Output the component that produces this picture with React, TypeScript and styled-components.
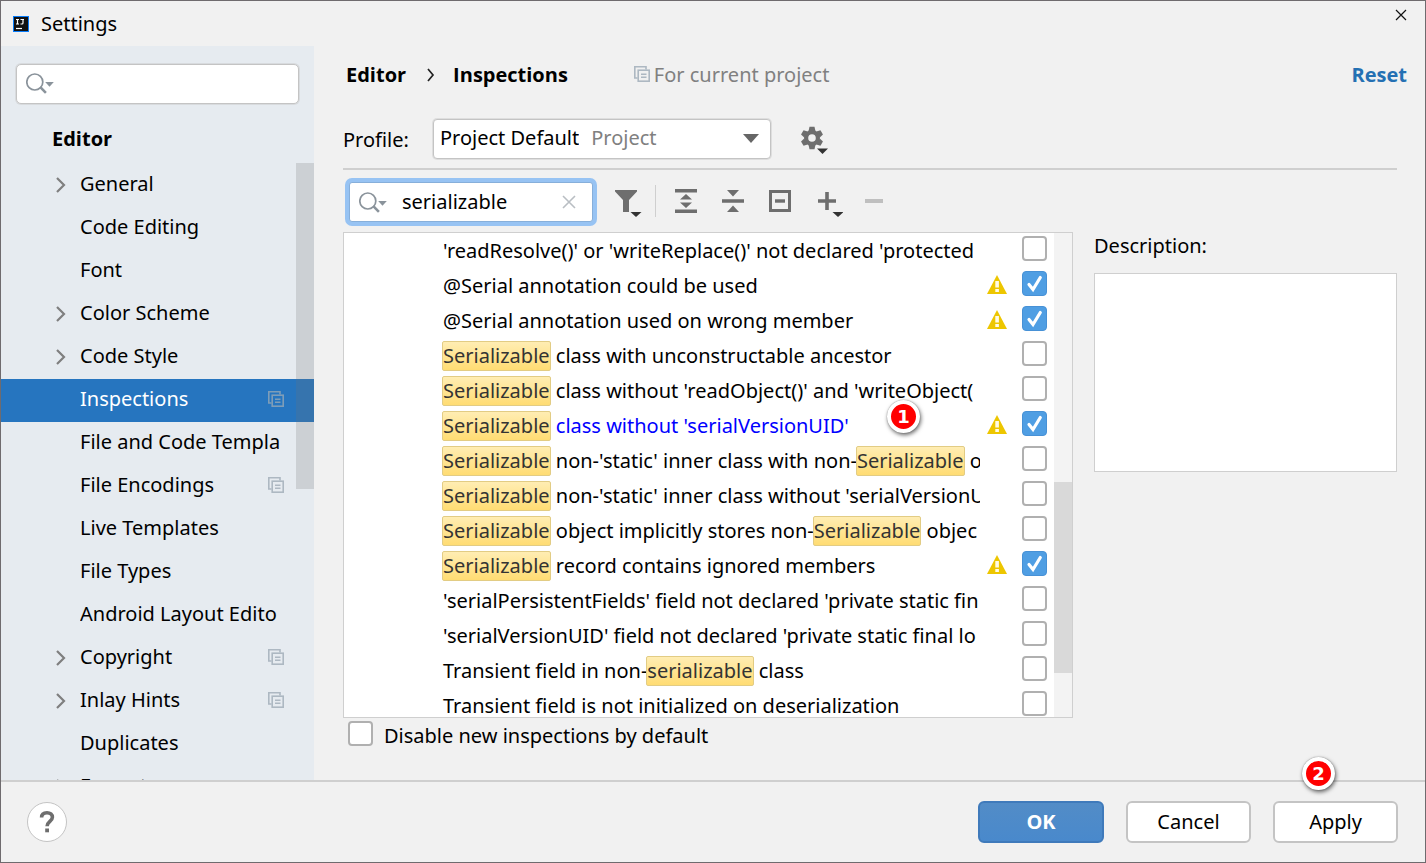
import React, { Fragment, useState } from "react";
import styled, { createGlobalStyle, css } from "styled-components";

const color = {
  frame: "#6f6b6e",
  window: "#f1f1f1",
  sidebar: "#e6ebf0",
  selection: "#2675bf",
  line: "#cfcfcf",
  border: "#c4c4c4",
  icon: "#6e6e6e",
  muted: "#808080",
  accent: "#4f9ee3",
};

const GlobalStyle = createGlobalStyle`
  *, *::before, *::after { box-sizing: border-box; }
  body {
    margin: 0;
    background: ${color.window};
  }
  body, button, input, select {
    font-family: "Noto Sans", "Open Sans", sans-serif;
    font-size: 20px;
    line-height: 28px;
    color: #000;
  }
`;

const boldText = css`
  font-family: "Open Sans", "Noto Sans", sans-serif;
  font-weight: 700;
`;

const Window = styled.div`
  display: flex;
  flex-direction: column;
  height: 100vh;
  border: 1px solid ${color.frame};
  background: ${color.window};
  overflow: hidden;
`;

const TitleBar = styled.header`
  display: flex;
  align-items: center;
  flex: none;
  height: 45px;
  padding: 0 18px 0 12px;
  gap: 12px;
`;

const TitleText = styled.h1`
  flex: 1;
  margin: 0;
  font-size: 20px;
  font-weight: 400;
`;

const CloseButton = styled.button`
  display: flex;
  padding: 0;
  border: 0;
  margin-bottom: 18px;
  background: none;
`;

const Body = styled.div`
  display: flex;
  flex: 1;
  min-height: 0;
`;

const Sidebar = styled.nav`
  position: relative;
  display: flex;
  flex-direction: column;
  flex: none;
  width: 313px;
  background: ${color.sidebar};
  overflow: hidden;
`;

const SidebarSearch = styled.label`
  display: flex;
  align-items: center;
  flex: none;
  height: 40px;
  margin: 18px 15px 0;
  padding: 0 9px 2px;
  gap: 10px;
  border: 1px solid ${color.border};
  border-radius: 5px;
  background: #fff;
  box-shadow: 0 0 0 1px rgba(196, 196, 196, 0.4);
`;

const TextInput = styled.input`
  flex: 1;
  min-width: 0;
  padding: 0;
  border: 0;
  outline: 0;
  background: transparent;
`;

const TreeHeading = styled.h2`
  flex: none;
  height: 46px;
  margin: 14px 0 0;
  padding: 6px 0 0 51px;
  font-size: 20px;
  line-height: 30px;
  ${boldText}
`;

const Tree = styled.ul`
  flex: none;
  margin: 0;
  padding: 0;
  list-style: none;
`;

const TreeItem = styled.a<{ $selected?: boolean }>`
  display: flex;
  align-items: center;
  height: 43px;
  padding: 0 30px 4px 54px;
  color: ${(p) => (p.$selected ? "#fff" : "#000")};
  background: ${(p) => (p.$selected ? color.selection : "transparent")};
  text-decoration: none;
`;

const TreeArrow = styled.span`
  display: flex;
  flex: none;
  width: 25px;
  padding-top: 2px;
`;

const TreeLabel = styled.span`
  flex: 1;
  overflow: hidden;
  white-space: nowrap;
`;

const TreeScrollbar = styled.div`
  position: absolute;
  top: 117px;
  right: 0;
  width: 18px;
  height: 326px;
  background: rgba(115, 115, 115, 0.22);
`;

const Main = styled.main`
  display: flex;
  flex-direction: column;
  flex: 1;
  min-width: 0;
  padding: 0 28px 0 29px;
`;

const Breadcrumb = styled.div`
  display: flex;
  align-items: center;
  flex: none;
  height: 58px;
  margin-right: -10px;
  padding-left: 3px;
`;

const Crumb = styled.span`
  ${boldText}
`;

const CrumbArrow = styled.span`
  display: flex;
  padding: 0 18px 0 21px;
`;

const ScopeNote = styled.span`
  display: flex;
  align-items: center;
  flex: 1;
  gap: 4px;
  padding-left: 66px;
  color: ${color.muted};

  svg {
    margin-bottom: 2px;
  }
`;

const ResetLink = styled.a`
  color: #2470b3;
  text-decoration: none;
  ${boldText}
`;

const ProfileRow = styled.div`
  display: flex;
  align-items: center;
  flex: none;
  height: 66px;
  padding: 13px 0 7px;
  border-bottom: 2px solid ${color.line};
`;

const ProfileLabel = styled.label`
  flex: none;
  width: 90px;
  padding-top: 2px;
`;

const Combo = styled.span`
  display: flex;
  align-items: center;
  width: 338px;
  height: 40px;
  padding: 0 11px 2px 6px;
  border: 1px solid ${color.border};
  border-radius: 4px;
  background: #fff;
  box-shadow: 0 0 0 1px rgba(196, 196, 196, 0.4);
`;

const ComboSelect = styled.select`
  appearance: none;
  field-sizing: content;
  padding: 0;
  border: 0;
  outline: 0;
  background: transparent;
`;

const ComboHint = styled.span`
  flex: 1;
  padding-left: 12px;
  color: ${color.muted};
`;

const IconButton = styled.button<{ $width?: number }>`
  display: flex;
  align-items: center;
  justify-content: center;
  flex: none;
  width: ${(p) => p.$width ?? 47}px;
  height: 40px;
  padding: 0;
  border: 0;
  background: none;
`;

const Toolbar = styled.div`
  display: flex;
  align-items: center;
  flex: none;
  height: 62px;
  padding-left: 5px;
`;

const FilterSearch = styled.label`
  display: flex;
  align-items: center;
  flex: none;
  width: 244px;
  height: 40px;
  margin: 2px 9px 0 1px;
  padding: 0 16px 0 9px;
  gap: 13px;
  border: 1px solid #87afda;
  border-radius: 3px;
  background: #fff;
  box-shadow: 0 0 0 4px #97c3f3;
`;

const ClearButton = styled.button`
  display: flex;
  padding: 0;
  border: 0;
  background: none;
`;

const ToolSeparator = styled.span`
  width: 1px;
  height: 32px;
  margin: 0 6px;
  background: ${color.line};
`;

const Columns = styled.div`
  display: grid;
  grid-template-columns: minmax(0, 730fr) minmax(0, 303fr);
  gap: 21px;
  flex: 1;
  min-height: 0;
`;

const ListColumn = styled.div`
  display: flex;
  flex-direction: column;
  min-height: 0;
`;

const ListFrame = styled.div`
  display: flex;
  flex: 1;
  min-height: 0;
  border: 1px solid ${color.line};
  background: #fff;
  overflow: hidden;
`;

const InspectionList = styled.ul`
  flex: 1;
  min-width: 0;
  margin: 0;
  padding: 0;
  list-style: none;
`;

const InspectionRow = styled.li`
  position: relative;
  display: flex;
  height: 35px;
  padding: 0 7px 0 98px;
`;

const InspectionName = styled.span<{ $modified?: boolean }>`
  flex: 1;
  min-width: 0;
  padding-left: 1px;
  line-height: 35px;
  white-space: pre;
  overflow: hidden;
  color: ${(p) => (p.$modified ? "#0000ff" : "#000")};
`;

const Match = styled.mark`
  display: inline-block;
  height: 30px;
  margin-left: -1px;
  border: 1px solid #e2cc84;
  border-radius: 2px;
  color: #333;
  line-height: 28px;
  background: linear-gradient(#ffedb3, #ffdc73);
`;

const SeveritySlot = styled.span`
  display: flex;
  flex: none;
  width: 20px;
  margin: 7px 15px 0 7px;
`;

const CheckWrap = styled.span`
  display: grid;
  flex: none;
  width: 25px;
  height: 25px;
  margin-top: 3px;

  > * {
    grid-area: 1 / 1;
  }

  svg {
    pointer-events: none;
  }
`;

const CheckInput = styled.input`
  appearance: none;
  width: 25px;
  height: 25px;
  margin: 0;
  border: 2px solid #b0b0b0;
  border-radius: 4px;
  background: #fff;

  &:checked {
    border: 1px solid #4791d6;
    background: ${color.accent};
  }
`;

const ListScrollbar = styled.div`
  flex: none;
  width: 18px;
  padding-top: 249px;
  background: #f3f3f3;
`;

const ListThumb = styled.div`
  height: 191px;
  background: #d9d9d9;
`;

const DisableRow = styled.label`
  display: flex;
  flex: none;
  height: 62px;
  gap: 11px;
  padding-left: 5px;
`;

const DisableText = styled.span`
  padding-top: 4px;
`;

const DescriptionColumn = styled.section`
  display: flex;
  flex-direction: column;
`;

const DescriptionTitle = styled.h3`
  margin: 0;
  height: 41px;
  font-size: 20px;
  font-weight: 400;
`;

const DescriptionBox = styled.div`
  height: 199px;
  border: 1px solid ${color.line};
  background: #fff;
`;

const Footer = styled.footer`
  display: flex;
  align-items: center;
  flex: none;
  height: 82px;
  padding: 0 27px 0 26px;
  gap: 22px;
  border-top: 2px solid ${color.line};
`;

const HelpButton = styled.button`
  display: flex;
  align-items: center;
  justify-content: center;
  width: 40px;
  height: 40px;
  margin-right: auto;
  padding: 0;
  border: 1px solid ${color.border};
  border-radius: 50%;
  background: #fff;
`;

const FooterButton = styled.button<{ $primary?: boolean }>`
  position: relative;
  width: 125px;
  height: 42px;
  padding: 0;
  border: 2px solid ${color.border};
  border-radius: 6px;
  background: #fff;
  ${(p) =>
    p.$primary &&
    css`
      width: 126px;
      border-color: #3f7abb;
      background: linear-gradient(#528cc7, #4989cc);
      color: #fff;
      ${boldText}
    `}
`;

const Marker = styled.span<{ $left: number; $top: number }>`
  position: absolute;
  left: ${(p) => p.$left}px;
  top: ${(p) => p.$top}px;
  z-index: 1;
  width: 33px;
  height: 33px;
  border: 4px solid #fff;
  border-radius: 50%;
  background: #f00;
  box-shadow: 1px 2px 4px rgba(0, 0, 0, 0.6), 0 0 1px rgba(0, 0, 0, 0.5);
  color: #fff;
  font-family: "DejaVu Sans", sans-serif;
  font-size: 18px;
  line-height: 25px;
  font-weight: 700;
  text-align: center;
`;

const AppIcon = () => (
  <svg width="16" height="16" viewBox="0 0 16 16" aria-hidden="true">
    <rect width="16" height="16" fill="#087cfa" />
    <rect x="1" y="1" width="14" height="14" fill="#111" />
    <path d="M3 3.5h3M4.5 3.5v4M3 8h3M7.500 3.5h3.500M10 3.5v3.500q0 1-1 1H7.500" stroke="#fff" strokeWidth="1.2" fill="none" />
    <path d="M3 12.5h6" stroke="#fff" strokeWidth="1.2" />
  </svg>
);

const CloseIcon = () => (
  <svg width="12" height="12" viewBox="0 0 12 12" aria-hidden="true">
    <path d="M1 1l10 10M11 1L1 11" stroke="#111" strokeWidth="1.2" />
  </svg>
);

const SearchIcon = () => (
  <svg width="30" height="24" viewBox="0 0 30 24" aria-hidden="true" style={{ flex: "none" }}>
    <circle cx="8.8" cy="11" r="8" fill="none" stroke="#8a939b" strokeWidth="1.7" />
    <path d="M14.300 16.200l5.600 5.600" stroke="#8a939b" strokeWidth="2.6" />
    <path d="M19.200 11h8.6l-4.3 4.8z" fill="#8a939b" />
  </svg>
);

const ChevronIcon = () => (
  <svg width="12" height="18" viewBox="0 0 12 18" aria-hidden="true">
    <path d="M2 2l7 7-7 7" stroke="#7f7f7f" strokeWidth="2.2" fill="none" />
  </svg>
);

const CrumbChevron = () => (
  <svg width="8" height="14" viewBox="0 0 8 14" aria-hidden="true">
    <path d="M1 1l5 6-5 6" stroke="#222" strokeWidth="1.7" fill="none" />
  </svg>
);

const ScopeIcon = ({ tint = "#adb8c2" }: { tint?: string }) => (
  <svg width="16" height="16" viewBox="0 0 16 16" aria-hidden="true" style={{ flex: "none" }}>
    <path d="M3.500 12H.8V.8H12v2.700" stroke={tint} strokeWidth="1.6" fill="none" />
    <rect x="4.2" y="4.2" width="11" height="11" stroke={tint} strokeWidth="1.6" fill="none" />
    <path d="M7 8.200h5.500M7 11.300h5.500" stroke={tint} strokeWidth="1.5" />
  </svg>
);

const ComboArrow = () => (
  <svg width="16" height="9" viewBox="0 0 16 9" aria-hidden="true">
    <path d="M0 0h16L8 9z" fill="#666" />
  </svg>
);

const GearIcon = () => (
  <svg width="32" height="32" viewBox="0 0 32 32" aria-hidden="true">
    <g fill={color.icon} transform="translate(14 15)">
      <path
        fillRule="evenodd"
        d="M-8 0a8 8 0 1 0 16 0a8 8 0 1 0-16 0zM-3.8 0a3.8 3.8 0 1 0 7.6 0a3.8 3.8 0 1 0-7.6 0z"
      />
      {[0, 60, 120, 180, 240, 300].map((angle) => (
        <path key={angle} d="M-3.4-7l.9-4.2h5l.9 4.2z" transform={`rotate(${angle})`} />
      ))}
    </g>
    <path d="M19 25.5h11L24.500 31z" fill="#333" />
  </svg>
);

const FilterIcon = () => (
  <svg width="32" height="32" viewBox="0 0 32 32" aria-hidden="true">
    <path d="M5 5h22v1.500l-8 8.500v12h-6v-12l-8-8.500z" fill={color.icon} />
    <path d="M20.500 27h11L26 32z" fill="#333" />
  </svg>
);

const ExpandIcon = () => (
  <svg width="24" height="26" viewBox="0 0 24 26" aria-hidden="true">
    <path d="M1 1h22v3.500H1zM1 21.500h22V25H1zM12 6l6 5.500H6zM12 20l6-5.500H6z" fill={color.icon} />
  </svg>
);

const CollapseIcon = () => (
  <svg width="24" height="24" viewBox="0 0 24 24" aria-hidden="true">
    <path d="M1 10.200h22v3.600H1zM6 1h12l-6 6.500zM6 23h12l-6-6.500z" fill={color.icon} />
  </svg>
);

const GroupIcon = () => (
  <svg width="24" height="24" viewBox="0 0 24 24" aria-hidden="true">
    <rect x="2.500" y="2.500" width="19" height="19" fill="none" stroke={color.icon} strokeWidth="3" />
    <path d="M7 12h10" stroke={color.icon} strokeWidth="3.400" />
  </svg>
);

const AddIcon = () => (
  <svg width="32" height="32" viewBox="0 0 32 32" aria-hidden="true">
    <path d="M16 7v18M7 16h18" stroke={color.icon} strokeWidth="3.600" />
    <path d="M21.500 27h11L27 32z" fill="#333" />
  </svg>
);

const RemoveIcon = () => (
  <svg width="18" height="4" viewBox="0 0 18 4" aria-hidden="true">
    <rect width="18" height="4" fill="#bfbfbf" />
  </svg>
);

const ClearIcon = () => (
  <svg width="14" height="14" viewBox="0 0 14 14" aria-hidden="true">
    <path d="M1 1l12 12M13 1L1 13" stroke="#b9bec3" strokeWidth="1.600" />
  </svg>
);

const WarningIcon = () => (
  <svg width="20" height="19" viewBox="0 0 20 19" role="img" aria-label="Warning">
    <path d="M10 0l10 19H0z" fill="#edc600" />
    <rect x="8.300" y="6" width="3.600" height="6.500" fill="#fffbe6" />
    <rect x="8.300" y="14" width="3.600" height="3" fill="#fffbe6" />
  </svg>
);

const TickIcon = () => (
  <svg width="25" height="25" viewBox="0 0 25 25" aria-hidden="true">
    <path d="M7 13.500l4 5L18.300 6.500" stroke="#fff" strokeWidth="3.200" strokeLinecap="round" fill="none" />
  </svg>
);

const HelpIcon = () => (
  <svg width="16" height="24" viewBox="0 0 16 24" aria-hidden="true">
    <path
      d="M2.600 7.500C2.600 4.200 4.800 2.700 8 2.700s5.400 1.800 5.400 4.600c0 4.100-5.300 4.300-5.300 9"
      stroke={color.icon}
      strokeWidth="3.600"
      fill="none"
    />
    <rect x="6.200" y="18.500" width="3.800" height="3.800" fill={color.icon} />
  </svg>
);

type Page = { name: string; branch?: boolean; project?: boolean };

const pages: Page[] = [
  { name: "General", branch: true },
  { name: "Code Editing" },
  { name: "Font" },
  { name: "Color Scheme", branch: true },
  { name: "Code Style", branch: true },
  { name: "Inspections", project: true },
  { name: "File and Code Templa" },
  { name: "File Encodings", project: true },
  { name: "Live Templates" },
  { name: "File Types" },
  { name: "Android Layout Edito" },
  { name: "Copyright", branch: true, project: true },
  { name: "Inlay Hints", branch: true, project: true },
  { name: "Duplicates" },
  { name: "Emmet", branch: true },
];

type Inspection = { name: string; on?: boolean; modified?: boolean; marker?: string };

const inspections: Inspection[] = [
  { name: "'readResolve()' or 'writeReplace()' not declared 'protected" },
  { name: "@Serial annotation could be used", on: true },
  { name: "@Serial annotation used on wrong member", on: true },
  { name: "Serializable class with unconstructable ancestor" },
  { name: "Serializable class without 'readObject()' and 'writeObject(" },
  { name: "Serializable class without 'serialVersionUID'", on: true, modified: true, marker: "1" },
  { name: "Serializable non-'static' inner class with non-Serializable o" },
  { name: "Serializable non-'static' inner class without 'serialVersionU" },
  { name: "Serializable object implicitly stores non-Serializable objec" },
  { name: "Serializable record contains ignored members", on: true },
  { name: "'serialPersistentFields' field not declared 'private static fin" },
  { name: "'serialVersionUID' field not declared 'private static final lo" },
  { name: "Transient field in non-serializable class" },
  { name: "Transient field is not initialized on deserialization" },
];

const Highlighted = ({ text }: { text: string }) => (
  <>
    {text.split(/(serializable)/i).map((part, i) =>
      i % 2 ? <Match key={i}>{part}</Match> : <Fragment key={i}>{part}</Fragment>
    )}
  </>
);

const Checkbox = ({ label, initial = false }: { label?: string; initial?: boolean }) => {
  const [checked, setChecked] = useState(initial);
  return (
    <CheckWrap>
      <CheckInput
        type="checkbox"
        aria-label={label}
        checked={checked}
        onChange={(e) => setChecked(e.target.checked)}
      />
      {checked && <TickIcon />}
    </CheckWrap>
  );
};

export default function App() {
  const [query, setQuery] = useState("serializable");
  return (
    <>
      <GlobalStyle />
      <Window>
        <TitleBar>
          <AppIcon />
          <TitleText>Settings</TitleText>
          <CloseButton aria-label="Close">
            <CloseIcon />
          </CloseButton>
        </TitleBar>

        <Body>
          <Sidebar aria-label="Settings pages">
            <SidebarSearch>
              <SearchIcon />
              <TextInput type="text" aria-label="Search settings" />
            </SidebarSearch>
            <TreeHeading>Editor</TreeHeading>
            <Tree>
              {pages.map((page) => {
                const selected = page.name === "Inspections";
                return (
                  <li key={page.name}>
                    <TreeItem href="#" $selected={selected} aria-current={selected ? "page" : undefined}>
                      <TreeArrow>{page.branch && <ChevronIcon />}</TreeArrow>
                      <TreeLabel>{page.name}</TreeLabel>
                      {page.project && <ScopeIcon tint={selected ? "#7e9db8" : undefined} />}
                    </TreeItem>
                  </li>
                );
              })}
            </Tree>
            <TreeScrollbar />
          </Sidebar>

          <Main>
            <Breadcrumb>
              <Crumb>Editor</Crumb>
              <CrumbArrow>
                <CrumbChevron />
              </CrumbArrow>
              <Crumb>Inspections</Crumb>
              <ScopeNote>
                <ScopeIcon />
                For current project
              </ScopeNote>
              <ResetLink href="#">Reset</ResetLink>
            </Breadcrumb>

            <ProfileRow>
              <ProfileLabel htmlFor="profile">Profile:</ProfileLabel>
              <Combo>
                <ComboSelect id="profile">
                  <option>Project Default</option>
                </ComboSelect>
                <ComboHint>Project</ComboHint>
                <ComboArrow />
              </Combo>
              <IconButton $width={86} aria-label="Profile actions">
                <GearIcon />
              </IconButton>
            </ProfileRow>

            <Toolbar>
              <FilterSearch>
                <SearchIcon />
                <TextInput
                  type="text"
                  aria-label="Search inspections"
                  value={query}
                  onChange={(e) => setQuery(e.target.value)}
                />
                <ClearButton aria-label="Clear search" onClick={() => setQuery("")}>
                  <ClearIcon />
                </ClearButton>
              </FilterSearch>
              <IconButton aria-label="Filter inspections">
                <FilterIcon />
              </IconButton>
              <ToolSeparator />
              <IconButton aria-label="Expand all">
                <ExpandIcon />
              </IconButton>
              <IconButton aria-label="Collapse all">
                <CollapseIcon />
              </IconButton>
              <IconButton aria-label="Reset to empty">
                <GroupIcon />
              </IconButton>
              <IconButton aria-label="Add inspection">
                <AddIcon />
              </IconButton>
              <IconButton aria-label="Remove inspection" disabled>
                <RemoveIcon />
              </IconButton>
            </Toolbar>

            <Columns>
              <ListColumn>
                <ListFrame>
                  <InspectionList>
                    {inspections.map((item) => (
                      <InspectionRow key={item.name}>
                        <InspectionName $modified={item.modified}>
                          <Highlighted text={item.name} />
                        </InspectionName>
                        <SeveritySlot>{item.on && <WarningIcon />}</SeveritySlot>
                        <Checkbox label={item.name} initial={item.on} />
                        {item.marker && (
                          <Marker $left={543} $top={-8}>
                            {item.marker}
                          </Marker>
                        )}
                      </InspectionRow>
                    ))}
                  </InspectionList>
                  <ListScrollbar>
                    <ListThumb />
                  </ListScrollbar>
                </ListFrame>
                <DisableRow>
                  <Checkbox />
                  <DisableText>Disable new inspections by default</DisableText>
                </DisableRow>
              </ListColumn>
              <DescriptionColumn>
                <DescriptionTitle>Description:</DescriptionTitle>
                <DescriptionBox />
              </DescriptionColumn>
            </Columns>
          </Main>
        </Body>

        <Footer>
          <HelpButton aria-label="Help">
            <HelpIcon />
          </HelpButton>
          <FooterButton $primary>OK</FooterButton>
          <FooterButton>Cancel</FooterButton>
          <FooterButton>
            Apply
            <Marker $left={27} $top={-46}>
              2
            </Marker>
          </FooterButton>
        </Footer>
      </Window>
    </>
  );
}
